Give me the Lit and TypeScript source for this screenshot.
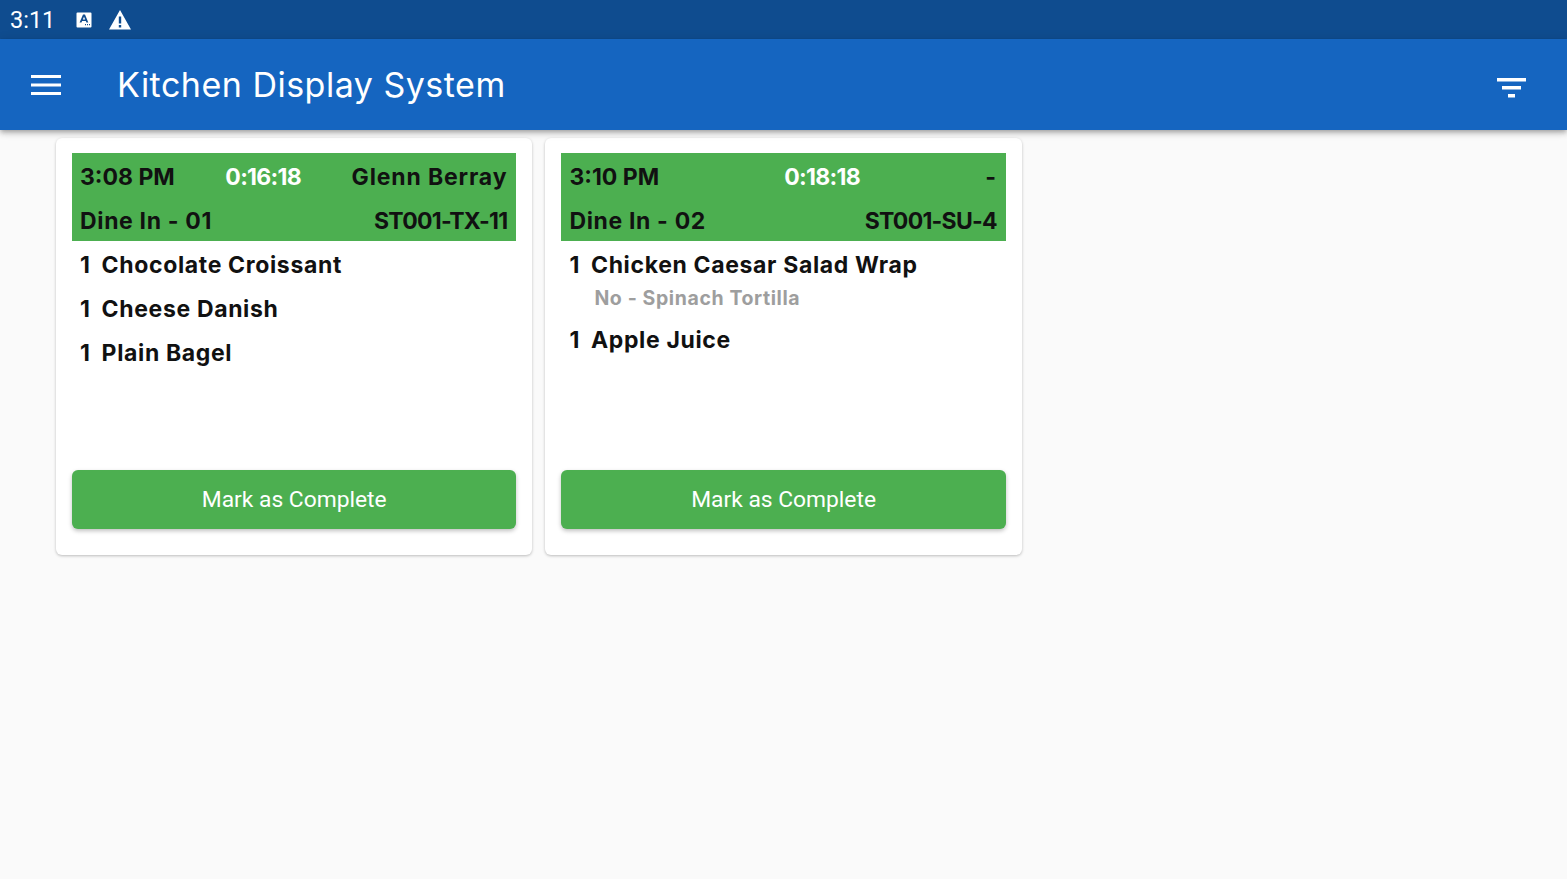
import { LitElement, html, css } from 'lit';
import { customElement } from 'lit/decorators.js';

interface Item {
  qty: number;
  name: string;
  note?: string;
}

interface Ticket {
  time: string;
  elapsed: string;
  server: string;
  table: string;
  code: string;
  items: Item[];
}

const TICKETS: Ticket[] = [
  {
    time: '3:08 PM',
    elapsed: '0:16:18',
    server: 'Glenn Berray',
    table: 'Dine In - 01',
    code: 'ST001-TX-11',
    items: [
      { qty: 1, name: 'Chocolate Croissant' },
      { qty: 1, name: 'Cheese Danish' },
      { qty: 1, name: 'Plain Bagel' },
    ],
  },
  {
    time: '3:10 PM',
    elapsed: '0:18:18',
    server: '-',
    table: 'Dine In - 02',
    code: 'ST001-SU-4',
    items: [
      { qty: 1, name: 'Chicken Caesar Salad Wrap', note: 'No - Spinach Tortilla' },
      { qty: 1, name: 'Apple Juice' },
    ],
  },
];

@customElement('app-root')
export class AppRoot extends LitElement {
  static styles = css`
    :host {
      display: flex;
      flex-direction: column;
      height: 879px;
      overflow: hidden;
      background: #fafafa;
      font-family: 'Inter', 'Liberation Sans', sans-serif;
    }

    .status {
      height: 39px;
      flex: none;
      display: flex;
      align-items: center;
      padding-left: 10px;
      background: #0f4c8f;
      color: #fff;
    }

    .clock {
      font: 400 23.5px 'Roboto', sans-serif;
      padding-top: 1px;
      width: 65px;
    }

    .status svg {
      display: block;
    }

    .status .warn {
      margin-left: 15px;
    }

    .appbar {
      height: 91px;
      flex: none;
      display: flex;
      align-items: center;
      padding: 0 41px 0 31px;
      background: #1565c0;
      color: #fff;
      box-shadow: 0 2px 4px -1px rgba(0, 0, 0, 0.2), 0 4px 5px rgba(0, 0, 0, 0.14),
        0 1px 10px rgba(0, 0, 0, 0.12);
      position: relative;
      z-index: 1;
    }

    .appbar svg {
      display: block;
    }

    .appbar .filter {
      margin-top: 6px;
    }

    .title {
      flex: 1;
      margin-left: 56px;
      font-size: 34px;
      font-weight: 400;
      letter-spacing: 0.5px;
    }

    .board {
      display: flex;
      align-items: flex-start;
      gap: 13px;
      padding: 8px 0 0 56px;
    }

    .card {
      width: 476.4px;
      height: 417px;
      box-sizing: border-box;
      display: flex;
      flex-direction: column;
      padding: 15px 16px 26px;
      background: #fff;
      border-radius: 6px;
      box-shadow: 0 1px 3px rgba(0, 0, 0, 0.25);
    }

    .head {
      background: #4caf50;
      color: #111;
      font-size: 23px;
      font-weight: 700;
    }

    .head-row {
      height: 44px;
      box-sizing: border-box;
      padding: 4px 9px 0 8px;
      display: flex;
      justify-content: space-between;
      align-items: center;
      white-space: nowrap;
    }

    .elapsed {
      color: #fff;
      letter-spacing: -0.7px;
    }

    .server {
      letter-spacing: 0.85px;
    }

    .table {
      letter-spacing: 0.65px;
    }

    .code {
      letter-spacing: -0.75px;
    }

    .items {
      flex: 1;
      padding: 0 8px;
    }

    .item {
      display: flex;
      align-items: center;
      height: 44px;
      box-sizing: border-box;
      padding-top: 4px;
      gap: 11px;
      font-size: 23px;
      font-weight: 700;
      letter-spacing: 0.65px;
      color: #111;
    }

    .note {
      margin: -1px 0 4px 25px;
      font-size: 19.5px;
      font-weight: 700;
      letter-spacing: 0.6px;
      line-height: 28px;
      color: #9e9e9e;
    }

    .complete {
      height: 59px;
      flex: none;
      padding: 0;
      border: none;
      border-radius: 6px;
      background: #4caf50;
      color: #fff;
      font: 400 22.8px 'Roboto', sans-serif;
      box-shadow: 0 2px 4px rgba(0, 0, 0, 0.25);
    }
  `;

  private renderTicket(t: Ticket) {
    return html`
      <section class="card">
        <div class="head">
          <div class="head-row">
            <span>${t.time}</span>
            <span class="elapsed">${t.elapsed}</span>
            <span class="server">${t.server}</span>
          </div>
          <div class="head-row">
            <span class="table">${t.table}</span>
            <span class="code">${t.code}</span>
          </div>
        </div>
        <div class="items">
          ${t.items.map(
            (item) => html`
              <div class="item"><span>${item.qty}</span><span>${item.name}</span></div>
              ${item.note ? html`<div class="note">${item.note}</div>` : ''}
            `
          )}
        </div>
        <button class="complete">Mark as Complete</button>
      </section>
    `;
  }

  render() {
    return html`
      <div class="status">
        <span class="clock">3:11</span>
        <svg width="18" height="18" viewBox="0 0 18 18">
          <path
            fill="#fff"
            fill-rule="evenodd"
            d="M2.5 1.5h13a1 1 0 0 1 1 1v13a1 1 0 0 1-1 1h-13a1 1 0 0 1-1-1v-13a1 1 0 0 1 1-1zM8 3.5 4.6 11.5h1.9l.6-1.6h3.7l.6 1.6h1.9L10 3.5zM9 5.8l1.2 2.6H7.8zM10 13h1v1.2h-1zM12 13h1v1.2h-1zM14 13h1v1.2h-1z"
          />
        </svg>
        <svg class="warn" width="24" height="22" viewBox="0 0 24 22">
          <path
            fill="#fff"
            fill-rule="evenodd"
            d="M12 1 23 20.5H1zM10.8 7.5v7h2.4v-7zM10.8 16v2.4h2.4V16z"
          />
        </svg>
      </div>
      <header class="appbar">
        <svg width="30" height="20" viewBox="0 0 30 20" fill="#fff">
          <rect y="0" width="30" height="3" />
          <rect y="8.5" width="30" height="3" />
          <rect y="17" width="30" height="3" />
        </svg>
        <div class="title">Kitchen Display System</div>
        <svg class="filter" width="29" height="20" viewBox="0 0 29 20" fill="#fff">
          <rect y="0" width="29" height="3.5" />
          <rect x="5" y="8" width="19" height="3.5" />
          <rect x="11" y="16" width="7" height="3.5" />
        </svg>
      </header>
      <main class="board">${TICKETS.map((t) => this.renderTicket(t))}</main>
    `;
  }
}
